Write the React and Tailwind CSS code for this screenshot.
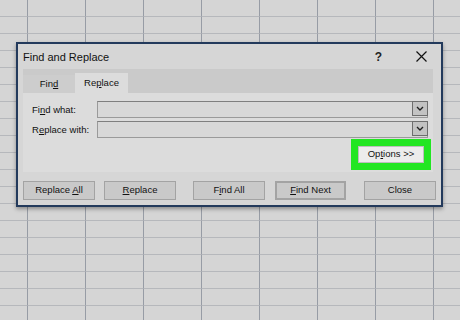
import React from "react";

const U = ({ children }) => <span className="underline underline-offset-[1px]">{children}</span>;

function Grid() {
  const rows = Array.from({ length: 20 });
  const cols = Array.from({ length: 8 });
  return (
    <div className="flex flex-col w-[460px] h-[320px] overflow-hidden bg-[#d5d5d5]">
      {rows.map((_, r) => (
        <div key={r} className="flex shrink-0 h-[17px]">
          <div className="shrink-0 w-[28px] h-full border-r-[1.5px] border-b border-r-[#979ca5] border-b-[#b6b8bc]" />
          {cols.map((_, c) => (
            <div key={c} className="shrink-0 w-[58px] h-full border-r-[1.5px] border-b border-r-[#979ca5] border-b-[#b6b8bc]" />
          ))}
        </div>
      ))}
    </div>
  );
}

function Btn({ children, className = "" }) {
  return (
    <div className={"h-[19px] flex items-center justify-center bg-[#c9c9c9] border border-[#a3a3a3] text-[9.5px] text-[#111] " + className}>
      <span className="whitespace-pre">{children}</span>
    </div>
  );
}

function Field({ label, className = "" }) {
  return (
    <div className={"flex items-center " + className}>
      <div className="w-[65px] text-[9.5px] text-[#111] leading-none">{label}</div>
      <div className="flex-1 h-[17px] flex bg-[#d8d8d8] border border-[#9a9a9a] border-t-[#7f7f7f]">
        <div className="flex-1" />
        <div className="w-[16px] h-full bg-[#c3c3c3] border border-[#6e6e6e] flex items-center justify-center -mr-px -my-px">
          <svg width="8" height="5" viewBox="0 0 8 5">
            <path d="M1 1 L4 4 L7 1" fill="none" stroke="#222" strokeWidth="1.4" />
          </svg>
        </div>
      </div>
    </div>
  );
}

export default function App() {
  return (
    <div className="relative w-[460px] h-[320px] overflow-hidden font-['Liberation_Sans',Arial,sans-serif]">
      <Grid />
      <div className="absolute left-[16px] top-[42px] w-[427px] h-[165px] border-2 border-[#233a5c] bg-[#d6d6d6] shadow-[0_2px_4px_rgba(0,0,0,0.35)] flex flex-col">
        {/* title bar */}
        <div className="h-[25px] shrink-0 flex items-center pl-[5px] pr-[14px]">
          <div className="text-[11px] text-[#111] leading-none mt-[1px]">Find and Replace</div>
          <div className="flex-1" />
          <div className="text-[12px] font-bold text-[#222] leading-none mr-[34px]">?</div>
          <svg width="11" height="11" viewBox="0 0 11 11">
            <path d="M0.5 0.5 L10.5 10.5 M10.5 0.5 L0.5 10.5" stroke="#111" strokeWidth="1.2" />
          </svg>
        </div>
        {/* tab control */}
        <div className="flex flex-col pl-[5px] pr-[8px]">
          <div className="h-[24px] bg-[#cacaca] flex items-end">
            <div className="w-[52px] h-[18px] bg-[#cdcdcd] flex items-center justify-center text-[9.5px] text-[#111]">
              <span>Fin<U>d</U></span>
            </div>
            <div className="w-[53px] h-[20px] bg-[#dcdcdc] flex items-center justify-center text-[9.5px] text-[#111]">
              <span>Re<U>p</U>lace</span>
            </div>
          </div>
          <div className="h-[79px] bg-[#dcdcdc] flex flex-col pl-[9px] pr-[5px] pt-[8px]">
            <Field label={<>Fi<U>n</U>d what:</>} />
            <Field className="mt-[3px]" label={<>R<U>e</U>place with:</>} />
            <div className="flex justify-end mt-[8px] mr-[4px]">
              <div className="w-[66px] h-[17px] bg-[#ececec] border border-[#bdbdbd] outline-[7px] outline-solid outline-[#22e622] flex items-center justify-center text-[9.5px] text-[#111]">
                <span className="whitespace-pre">Op<U>t</U>ions {">>"}</span>
              </div>
            </div>
          </div>
        </div>
        {/* buttons */}
        <div className="flex mt-[9px] pl-[5px]">
          <Btn className="w-[72px]">Replace <U>A</U>ll</Btn>
          <Btn className="w-[72px] ml-[9px]"><U>R</U>eplace</Btn>
          <Btn className="w-[72px] ml-[17px]">F<U>i</U>nd All</Btn>
          <Btn className="w-[71px] ml-[10px] border-2 border-[#1c2a55]"><U>F</U>ind Next</Btn>
          <Btn className="w-[72px] ml-[18px]">Close</Btn>
        </div>
      </div>
    </div>
  );
}
